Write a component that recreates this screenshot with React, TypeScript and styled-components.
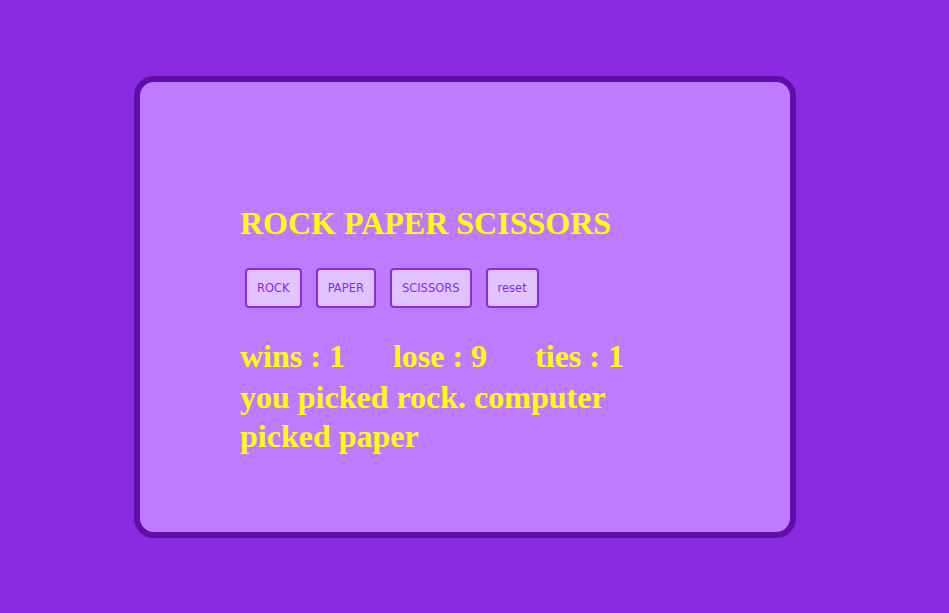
import React, { useState } from "react";
import styled, { createGlobalStyle } from "styled-components";

const GlobalStyle = createGlobalStyle`
  html, body {
    margin: 0;
    padding: 0;
    background: #8a2be2;
  }
  body {
    font-family: "Liberation Serif", "Times New Roman", serif;
  }
`;

const Page = styled.div`
  width: 949px;
  height: 613px;
  box-sizing: border-box;
  padding: 76px 0 0 134px;
  background: #8a2be2;
`;

const Card = styled.div`
  width: 662px;
  height: 462px;
  box-sizing: border-box;
  padding: 100px;
  border: 6px solid #600ea9;
  border-radius: 20px;
  background: #bf7bff;
  color: #ffff00;
`;

const Title = styled.h1`
  margin: 23px 0 26px;
  font-size: 32px;
  font-weight: bold;
  line-height: normal;
`;

const ButtonRow = styled.div`
  display: flex;
  gap: 14px;
  padding-left: 5px;
`;

const Button = styled.button`
  height: 40px;
  box-sizing: border-box;
  padding: 0 10px;
  border: 2px solid #8a2be2;
  border-radius: 4px;
  background: #e0c3ff;
  color: #8a2be2;
  font-family: "DejaVu Sans", Verdana, sans-serif;
  font-size: 11.5px;
  cursor: pointer;
`;

const Stats = styled.div`
  display: flex;
  gap: 48px;
  margin-top: 29px;
  font-size: 32px;
  font-weight: bold;
  line-height: 39px;
`;

const Result = styled.p`
  margin: 2px 0 0;
  font-size: 32px;
  font-weight: bold;
  line-height: 39px;
`;

export default function App() {
  const [score] = useState({ wins: 1, lose: 9, ties: 1 });
  return (
    <>
      <GlobalStyle />
      <Page>
        <Card>
          <Title>ROCK PAPER SCISSORS</Title>
          <ButtonRow>
            <Button>ROCK</Button>
            <Button>PAPER</Button>
            <Button>SCISSORS</Button>
            <Button>reset</Button>
          </ButtonRow>
          <Stats>
            <span>wins : {score.wins}</span>
            <span>lose : {score.lose}</span>
            <span>ties : {score.ties}</span>
          </Stats>
          <Result>you picked rock. computer picked paper</Result>
        </Card>
      </Page>
    </>
  );
}
